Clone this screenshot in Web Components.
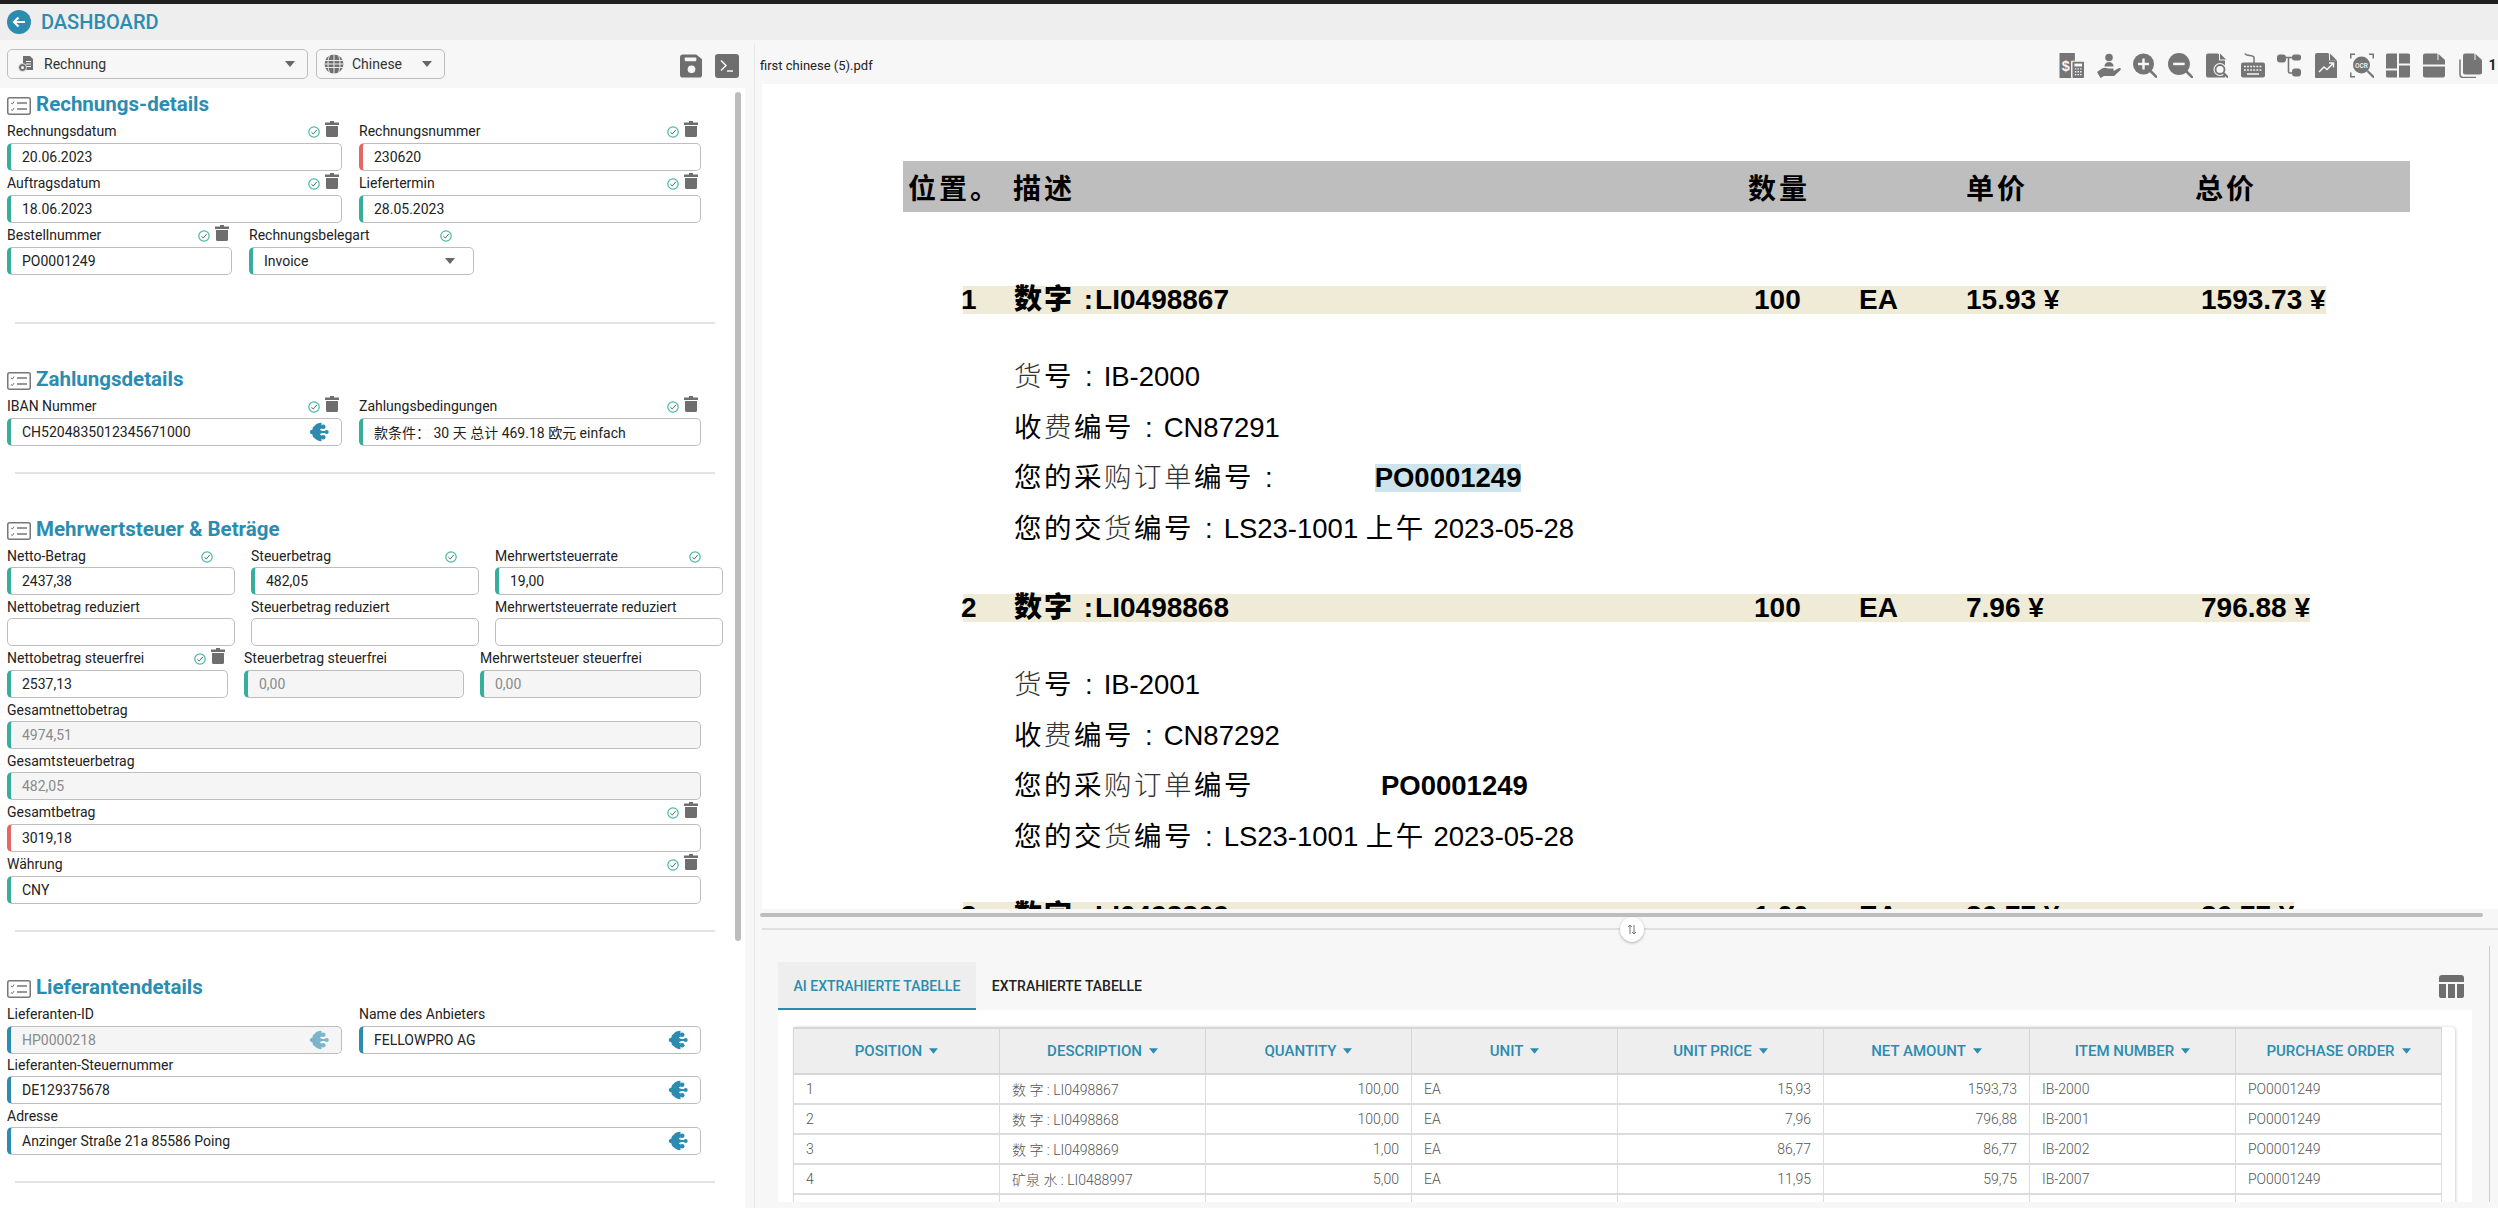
<!DOCTYPE html>
<html lang="de">
<head>
<meta charset="utf-8">
<title>Dashboard</title>
<style>
  html, body { margin: 0; height: 100%; overflow: hidden; background: #f7f7f7; }
  body { font-family: Roboto, "Noto Sans CJK SC", sans-serif; font-size: 14px; color: #222; }
</style>
</head>
<body>
<invoice-app></invoice-app>

<script>
const BLUE = '#2b8cb0';

const ICONS = {
  back: '<circle cx="12" cy="12" r="12" fill="currentColor"/><path d="M18 12H7M11.500 7.500 7 12l4.500 4.500" fill="none" stroke="#fff" stroke-width="2.200"/>',
  trash: '<path d="M5 0h4v1.500h5v2.500H0V1.500h5zM1 5h12v9.500a1.500 1.500 0 0 1-1.500 1.500h-9A1.500 1.500 0 0 1 1 14.500z" fill="currentColor"/>',
  check: '<circle cx="6" cy="6" r="5.200" fill="none" stroke="#45b8a6" stroke-width="1.200"/><path d="M3.400 6.200 5.300 8l3.400-4" fill="none" stroke="#4a6f70" stroke-width="1"/>',
  brain: '<path d="M12.500.8C9.500.8 7 2 5.500 4 3.500 5 3.500 6.500 3.500 7.500 1.500 8 .8 9 .8 10s.7 2 2.700 2.500c0 1 0 2.500 2 3.500 1.500 2 4 3.200 7 3.200z" fill="currentColor"/><circle cx="14.200" cy="4.800" r="2.300" fill="currentColor"/><circle cx="17.700" cy="10" r="2" fill="currentColor"/><circle cx="14.200" cy="15.200" r="2.300" fill="currentColor"/><path d="M12 10h5" stroke="currentColor" stroke-width="2"/><path d="M11 7.700h5M11 12.300h5" stroke="#fff" stroke-width="1"/>',
  caret: '<path d="M0 0h10L5 6z" fill="currentColor"/>',
  docmoney: '<path d="M5 0h7l3 3v11H5z" fill="currentColor"/><path d="M8 5.500h5M8 8h5M8 10.500h5" stroke="#f7f7f7" stroke-width="1"/><circle cx="4.500" cy="11.500" r="4" fill="currentColor" stroke="#f7f7f7" stroke-width=".8"/><circle cx="4.500" cy="11.500" r="1.500" fill="#f7f7f7"/>',
  globe: '<circle cx="10" cy="10" r="9.500" fill="currentColor"/><path d="M0 6.500h20M0 10h20M0 13.500h20M10 0v20M5.500 1.500c-2 5-2 12 0 17M14.500 1.500c2 5 2 12 0 17" fill="none" stroke="#f7f7f7" stroke-width=".9"/>',
  save: '<path d="M3 0h14l6 5v16a3 3 0 0 1-3 3H3a3 3 0 0 1-3-3V3a3 3 0 0 1 3-3z" fill="currentColor"/><rect x="5" y="3" width="12" height="4" rx="1" fill="#f7f7f7"/><circle cx="12" cy="15.500" r="4" fill="#f7f7f7"/>',
  terminal: '<rect width="24" height="24" rx="3" fill="currentColor"/><path d="M6 6.500 11 11.500 6 16.500M12 17h6" fill="none" stroke="#f7f7f7" stroke-width="1.500"/>',
  section: '<rect x=".75" y=".75" width="22.500" height="16.500" rx="2" fill="#fff" stroke="#777" stroke-width="1.500"/><path d="M10 6h10M10 12h10" stroke="#777" stroke-width="1.500"/><path d="M4 6l1.500 1L7 4.500M4 12.500l1.500 1L7 11" fill="none" stroke="#777" stroke-width="1"/>',
  columns: '<path d="M3 0h19a3 3 0 0 1 3 3v4H0V3a3 3 0 0 1 3-3zM0 9h7v14H2a2 2 0 0 1-2-2zM9 9h7v14H9zM18 9h7v12a2 2 0 0 1-2 2h-5z" fill="currentColor"/>',
  invoice: '<path d="M0 0h16v26H0z" fill="currentColor"/><rect x="12" y="8" width="14" height="18" rx="1" fill="#f7f7f7"/><rect x="13.500" y="9" width="12" height="17" rx="1" fill="currentColor"/><rect x="15.500" y="11" width="8" height="3" fill="#f7f7f7"/><path d="M16 16.500h8M16 19.500h8M16 22.500h8" stroke="#f7f7f7" stroke-width="1.500" stroke-dasharray="1.500 1.200"/><text x="6.500" y="19" font-family="Liberation Sans, sans-serif" font-weight="700" font-size="15" text-anchor="middle" fill="#f7f7f7">$</text>',
  hand: '<circle cx="13" cy="4.500" r="3.800" fill="currentColor"/><path d="M8.500 13.500c0-3 1.800-4.500 4.500-4.500s4.500 1.500 4.500 4.500z" fill="currentColor"/><path d="M1 19l5-3.500c2-1 4-1 6 0h4.500c1.500 0 1.500 2 0 2.200H12l6.500-.2 4.500-2.500c1.500-.5 2.500 1 1.300 2.200L18 23H8l-3.500 2z" fill="currentColor"/>',
  zoomin: '<circle cx="10.500" cy="10.500" r="10.500" fill="currentColor"/><path d="M17 17l7 7" stroke="currentColor" stroke-width="2.500"/><path d="M10.500 5v11M5 10.500h11" stroke="#f7f7f7" stroke-width="2.400"/>',
  zoomout: '<circle cx="10.500" cy="10.500" r="10.500" fill="currentColor"/><path d="M17 17l7 7" stroke="currentColor" stroke-width="2.500"/><path d="M5 10.500h11" stroke="#f7f7f7" stroke-width="2.400"/>',
  docsearch: '<path d="M2 0h10l7 7v17H2a2 2 0 0 1-2-2V2a2 2 0 0 1 2-2z" fill="currentColor"/><path d="M13 0l7 7h-7z" fill="#f7f7f7"/><path d="M14 0l6 6h-6z" fill="currentColor"/><circle cx="14" cy="16" r="6.500" fill="#f7f7f7"/><circle cx="14" cy="16" r="4.500" fill="none" stroke="currentColor" stroke-width="1.800"/><path d="M17.500 19.500l4.500 4.500" stroke="currentColor" stroke-width="2"/>',
  keyboard: '<path d="M4 0c1 3 9 1 9 4v6" fill="none" stroke="currentColor" stroke-width="1.500"/><rect y="9" width="24" height="15" rx="2" fill="currentColor"/><path d="M3 13h18M3 16.500h18" stroke="#f7f7f7" stroke-width="1.500" stroke-dasharray="1.800 1.300"/><path d="M6 20.500h12" stroke="#f7f7f7" stroke-width="1.500"/>',
  tree: '<rect y="1" width="9" height="8" rx="3" fill="currentColor"/><rect x="15" y="1" width="9" height="6" rx="2.500" fill="currentColor"/><rect x="15" y="15" width="9" height="8" rx="3" fill="currentColor"/><path d="M9 4h6M11.500 4v14c0 1 .5 1.500 1.500 1.500h2" fill="none" stroke="currentColor" stroke-width="1.600"/>',
  docchart: '<path d="M2 0h11l9 8v16a1.500 1.500 0 0 1-1.500 1.500H2A2 2 0 0 1 0 23.500V2a2 2 0 0 1 2-2z" fill="currentColor"/><path d="M14 0l8 7.500h-8z" fill="#f7f7f7"/><path d="M15 .5l7 7h-7z" fill="currentColor"/><path d="M4 19l5-5 3 2.500 6-6M14 10h4.500v4.500" fill="none" stroke="#f7f7f7" stroke-width="1.500"/>',
  ocr: '<path d="M.75 5V.75H5M19 .75h4.250V5M.75 19v4.250H5" fill="none" stroke="currentColor" stroke-width="1.500"/><circle cx="11.500" cy="11.500" r="8.500" fill="currentColor"/><text x="11.500" y="14" font-family="Roboto, sans-serif" font-size="6.500" font-weight="500" text-anchor="middle" fill="#f7f7f7">OCR</text><path d="M17.500 17.500l6.500 6.500" stroke="currentColor" stroke-width="2.200"/>',
  grid: '<path d="M1.500 0H11v15H0V1.500A1.500 1.500 0 0 1 1.500 0zM13 0h9.500A1.500 1.500 0 0 1 24 1.500V10H13zM0 17h11v7H1.500A1.500 1.500 0 0 1 0 22.500zM13 12h11v10.500a1.500 1.500 0 0 1-1.500 1.500H13z" fill="currentColor"/>',
  docsplit: '<path d="M2 0h12l8 7v4H0V2a2 2 0 0 1 2-2zM0 13h22v9a2 2 0 0 1-2 2H2a2 2 0 0 1-2-2z" fill="currentColor"/><path d="M14.500 0l7.500 6.500h-7.500z" fill="#f7f7f7"/><path d="M15.500.5l6.500 6h-6.500z" fill="currentColor"/>',
  copies: '<path d="M1 6v15a3 3 0 0 0 3 3h13" fill="none" stroke="currentColor" stroke-width="1.500"/><path d="M6 0h9l8 7v12a2 2 0 0 1-2 2H6a2 2 0 0 1-2-2V2a2 2 0 0 1 2-2z" fill="currentColor"/><path d="M15.500 0l7.500 6.500h-7.500z" fill="#f7f7f7"/><path d="M16.500.5l6.500 6h-6.500z" fill="currentColor"/>'
};

const VIEWS = {
  back: '0 0 24 24', trash: '0 0 14 16', check: '0 0 12 12', brain: '0 0 20 20', caret: '0 0 10 6',
  docmoney: '0 0 16 16', globe: '0 0 20 20', section: '0 0 24 18', columns: '0 0 25 23',
  invoice: '0 0 26 26', hand: '0 0 25 25', docsearch: '0 0 22 24', docchart: '0 0 22 25', docsplit: '0 0 22 24',
  copies: '0 0 23 24'
};

class AppIcon extends HTMLElement {
  connectedCallback() {
    const name = this.getAttribute('name');
    const w = this.getAttribute('w') || 24;
    const h = this.getAttribute('h') || w;
    const root = this.attachShadow({ mode: 'open' });
    root.innerHTML = `
      <style>
        :host { display: inline-flex; flex: none; line-height: 0; }
      </style>
      <svg width="${w}" height="${h}" viewBox="${VIEWS[name] || '0 0 24 24'}">${ICONS[name]}</svg>`;
  }
}
customElements.define('app-icon', AppIcon);

class AppHeader extends HTMLElement {
  constructor() {
    super();
    this.attachShadow({ mode: 'open' }).innerHTML = `
      <style>
        :host { display: flex; align-items: center; gap: 10px; height: 36px; padding-left: 7px;
          background: #eee; border-top: 4px solid #1f1f1f; color: ${BLUE}; font-size: 20px; font-weight: 500; }
      </style>
      <app-icon name="back"></app-icon><span><slot></slot></span>`;
  }
}
customElements.define('app-header', AppHeader);

class SelectBox extends HTMLElement {
  constructor() {
    super();
    this.attachShadow({ mode: 'open' }).innerHTML = `
      <style>
        :host { display: flex; align-items: center; box-sizing: border-box; height: 30px; padding: 0 12px 0 10px;
          border: 1px solid #bdbdbd; border-radius: 5px; color: #333; background: #f7f7f7; font-size: 14px; }
        span { flex: 1; }
        .ic { display: flex; color: #707070; }
        .car { color: #666; margin-left: 8px; }
      </style>
      <div class="ic"><slot name="icon"></slot></div><span><slot></slot></span><app-icon class="car" name="caret" w="10" h="6"></app-icon>`;
  }
}
customElements.define('select-box', SelectBox);

class FormField extends HTMLElement {
  connectedCallback() {
    const has = n => this.hasAttribute(n);
    const state = this.getAttribute('state') || '';
    const bar = { ok: '#36ad9d', err: '#e46767', ai: BLUE }[state];
    const root = this.attachShadow({ mode: 'open' });
    root.innerHTML = `
      <style>
        :host { display: block; min-width: 0; color: #222; }
        .head { display: flex; height: var(--label, 24px); box-sizing: border-box; padding-right: 3px; }
        label { flex: 1; align-self: center; font-size: 14px; white-space: nowrap; }
        .chk { margin: 7px 5px 0 0; align-self: flex-start; }
        .del { margin-top: 2px; align-self: flex-start; color: #6e6e6e; }
        .gap { width: 14px; }
        .box { display: flex; align-items: center; box-sizing: border-box; height: 28px; padding: 0 12px 0 11px;
          border: 1px solid #bdbdbd; border-radius: 5px; background: #fff; font-size: 14px; white-space: nowrap; }
        .bar { border-left: 4px solid ${bar}; }
        .off { background: #f5f5f5; color: #8a8a8a; }
        .val { flex: 1; min-height: 1em; }
        .brain { color: ${BLUE}; }
        .off .brain { opacity: .6; }
        .car { color: #666; margin-right: 6px; }
      </style>
      <div class="head">
        <label>${this.getAttribute('label')}</label>
        ${has('check') ? '<app-icon class="chk" name="check" w="12" h="12"></app-icon>' : ''}
        ${has('trash') ? '<app-icon class="del" name="trash" w="14" h="16"></app-icon>' : (has('check') ? '<div class="gap"></div>' : '')}
      </div>
      <div class="box ${bar ? 'bar' : ''} ${has('disabled') ? 'off' : ''}">
        <div class="val"><slot></slot></div>
        ${has('ai') ? '<app-icon class="brain" name="brain" w="20" h="20"></app-icon>' : ''}
        ${has('select') ? '<app-icon class="car" name="caret" w="10" h="6"></app-icon>' : ''}
      </div>`;
  }
}
customElements.define('form-field', FormField);

class FormRow extends HTMLElement {
  constructor() {
    super();
    this.attachShadow({ mode: 'open' }).innerHTML = `
      <style>
        :host { display: grid; grid-template-columns: var(--cols); column-gap: var(--gap, 17px); }
      </style>
      <slot></slot>`;
  }
}
customElements.define('form-row', FormRow);

class FormSection extends HTMLElement {
  constructor() {
    super();
    this.attachShadow({ mode: 'open' }).innerHTML = `
      <style>
        :host { display: block; margin-bottom: 41px; }
        h2 { display: flex; align-items: center; gap: 5px; height: 28px; margin: 0 0 1px; color: ${BLUE};
          font-size: 20.500px; font-weight: 700; white-space: nowrap; }
        app-icon { margin-top: 3px; }
        hr { height: 2px; margin: var(--after, 26px) 20px 0 8px; border: 0; background: #e3e3e3; }
      </style>
      <h2><app-icon name="section" w="24" h="18"></app-icon><slot name="title"></slot></h2>
      <slot></slot>
      <hr>`;
  }
}
customElements.define('form-section', FormSection);

class InvoiceForm extends HTMLElement {
  constructor() {
    super();
    this.attachShadow({ mode: 'open' }).innerHTML = `
      <style>
        :host { display: flex; flex: 1; min-height: 0; background: #fff; overflow: hidden; }
        .content { width: 728px; padding: 2px 0 0 7px; flex: none; }
        .thumb { width: 6px; height: 849px; margin-top: 4px; border-radius: 3px; background: #bdbdbd; flex: none; }
      </style>
      <div class="content"><slot></slot></div>
      <div class="thumb"></div>`;
  }
}
customElements.define('invoice-form', InvoiceForm);

class LeftPane extends HTMLElement {
  constructor() {
    super();
    this.attachShadow({ mode: 'open' }).innerHTML = `
      <style>
        :host { display: flex; flex-direction: column; flex: none; width: 757px; box-sizing: border-box;
          padding-right: 12px; min-height: 0; position: relative; }
        .bar { display: flex; align-items: center; height: 48px; padding: 0 6px 0 7px; gap: 8px; flex: none; }
        .btn { display: flex; gap: 12px; margin-left: auto; margin-top: 4px; color: #6e6e6e; }
        .line { position: absolute; left: 754px; top: 4px; bottom: 0; width: 1px; background: #e8e8e8; }
      </style>
      <div class="bar">
        <slot name="selects"></slot>
        <div class="btn">
          <app-icon name="save" w="23" h="24"></app-icon>
          <app-icon name="terminal" w="24" h="24"></app-icon>
        </div>
      </div>
      <slot></slot>
      <div class="line"></div>`;
  }
}
customElements.define('left-pane', LeftPane);

class PdfToolbar extends HTMLElement {
  constructor() {
    super();
    const names = [['invoice', 26], ['hand', 25], ['zoomin', 24], ['zoomout', 25], ['docsearch', 22], ['keyboard', 24],
      ['tree', 24], ['docchart', 22], ['ocr', 24], ['grid', 24], ['docsplit', 22], ['copies', 23]];
    this.attachShadow({ mode: 'open' }).innerHTML = `
      <style>
        :host { display: flex; align-items: center; flex: none; height: 44px; padding-left: 3px; font-size: 13px; color: #222; overflow: hidden; }
        .name { flex: 1; margin-top: 6px; }
        .cell { display: flex; justify-content: center; width: 36.200px; color: #757575; margin-top: 6px; }
        .page { width: 9.600px; font-weight: 700; font-size: 14px; margin-top: 6px; overflow: hidden; }
      </style>
      <div class="name"><slot></slot></div>
      ${names.map(n => `<div class="cell"><app-icon name="${n[0]}" w="${n[1]}" h="25"></app-icon></div>`).join('')}
      <div class="page">1</div>`;
  }
}
customElements.define('pdf-toolbar', PdfToolbar);

class PdfHead extends HTMLElement {
  constructor() {
    super();
    this.attachShadow({ mode: 'open' }).innerHTML = `
      <style>
        :host { display: grid; grid-template-columns: 105px 735px 218px 229px 1fr; align-items: center; width: 1502px;
          height: 51px; padding-left: 5px; background: #bebebe; color: #000; font: 700 28px "Liberation Sans", "Noto Sans CJK SC", sans-serif; }
        span { letter-spacing: 3px; white-space: nowrap; }
      </style>
      <span>位置。</span><span>描述</span><span>数量</span><span>单价</span><span>总价</span>`;
  }
}
customElements.define('pdf-head', PdfHead);

class PdfItem extends HTMLElement {
  connectedCallback() {
    const cols = this.getAttribute('cells').split('|');
    const root = this.attachShadow({ mode: 'open' });
    root.innerHTML = `
      <style>
        :host { display: block; margin: 0 0 40px 60px; font: 27.500px "Liberation Sans", "Noto Sans CJK SC", sans-serif; color: #000; }
        .band { display: grid; width: fit-content; grid-template-columns: 51px 740px 105px 107px 235px auto; align-items: center; height: 28px;
          line-height: 28px; background: #efebd7; font-size: 28px; font-weight: 700; white-space: nowrap; }
        .lines { padding-top: 38px; margin-left: 51px; }
        .n { margin-left: -2px; }
        .d b { letter-spacing: 2px; }
        .d i { font-style: normal; margin-left: 2px; }
      </style>
      <div class="band">
        <span class="n">${cols[0]}</span><span class="d"><b>${cols[1]}</b>:<i>${cols[2]}</i></span><span>${cols[3]}</span><span>${cols[4]}</span><span>${cols[5]}</span><span>${cols[6]}</span>
      </div>
      <div class="lines"><slot></slot></div>`;
  }
}
customElements.define('pdf-item', PdfItem);

// text attribute: [..] is chinese, {..} is the thinner chinese the pdf has in places
class PdfLine extends HTMLElement {
  connectedCallback() {
    const text = this.getAttribute('text')
      .replace(':', '<span class="k">:</span>')
      .replace(/\[(.+?)\]/g, '<span class="c">$1</span>')
      .replace(/\{(.+?)\}/g, '<span class="c t">$1</span>');
    const po = this.getAttribute('po');
    const root = this.attachShadow({ mode: 'open' });
    root.innerHTML = `
      <style>
        :host { display: block; height: 50.500px; line-height: 50.500px; }
        .l { white-space: pre; }
        .c { letter-spacing: 2.500px; }
        .t { font-weight: 300; color: #333; }
        .k { margin: 0 11px; }
        .po { display: inline-block; height: 28px; line-height: 28px; font-weight: 700; margin-left: ${this.getAttribute('gap') || 0}px; }
        .mark { background: #cde4ec; }
      </style>
      <div class="l">${text}${po ? `<span class="po ${this.hasAttribute('mark') ? 'mark' : ''}">${po}</span>` : ''}</div>`;
  }
}
customElements.define('pdf-line', PdfLine);

class PdfViewer extends HTMLElement {
  constructor() {
    super();
    this.attachShadow({ mode: 'open' }).innerHTML = `
      <style>
        :host { display: block; height: 825px; flex: none; margin-left: 5px; padding: 77px 0 0 141px; box-sizing: border-box;
          background: #fff; overflow: hidden; }
        .gap { height: 74px; }
      </style>
      <slot name="head"></slot>
      <div class="gap"></div>
      <slot></slot>`;
  }
}
customElements.define('pdf-viewer', PdfViewer);

class TabBar extends HTMLElement {
  constructor() {
    super();
    this.attachShadow({ mode: 'open' }).innerHTML = `
      <style>
        :host { display: flex; align-items: stretch; height: 48px; font-size: 14px; font-weight: 500; white-space: nowrap; }
        .tab { display: flex; align-items: center; padding: 0 15.500px; box-sizing: border-box; color: #222; }
        .on { background: #eee; color: ${BLUE}; border-bottom: 2px solid ${BLUE}; padding-top: 2px; }
        .off { padding: 0 16px; }
        .right { margin-left: auto; margin-right: 8px; align-self: center; color: #6e6e6e; display: flex; }
      </style>
      <div class="tab on">AI EXTRAHIERTE TABELLE</div>
      <div class="tab off">EXTRAHIERTE TABELLE</div>
      <div class="right"><app-icon name="columns" w="25" h="23"></app-icon></div>`;
  }
}
customElements.define('tab-bar', TabBar);

class DataTable extends HTMLElement {
  constructor() {
    super();
    const heads = ['POSITION', 'DESCRIPTION', 'QUANTITY', 'UNIT', 'UNIT PRICE', 'NET AMOUNT', 'ITEM NUMBER', 'PURCHASE ORDER'];
    const rows = [
      ['1', '数 字 : LI0498867', '100,00', 'EA', '15,93', '1593,73', 'IB-2000', 'PO0001249'],
      ['2', '数 字 : LI0498868', '100,00', 'EA', '7,96', '796,88', 'IB-2001', 'PO0001249'],
      ['3', '数 字 : LI0498869', '1,00', 'EA', '86,77', '86,77', 'IB-2002', 'PO0001249'],
      ['4', '矿泉 水 : LI0488997', '5,00', 'EA', '11,95', '59,75', 'IB-2007', 'PO0001249'],
      ['', '', '', '', '', '', '', '']
    ];
    const right = [2, 4, 5];
    this.attachShadow({ mode: 'open' }).innerHTML = `
      <style>
        :host { display: block; flex: 1; min-height: 0; background: #fff; padding: 17px 0 0 15px; overflow: hidden; }
        .card { width: 1662px; height: 200px; box-shadow: 1px 0 3px rgba(0,0,0,.18); border-radius: 4px 4px 0 0; }
        table { width: 1649px; border-collapse: collapse; table-layout: fixed; }
        th { height: 44px; background: #eee; color: ${BLUE}; font-size: 15px; font-weight: 500; border: 1px solid #d6d6d6; border-width: 2px 1px; padding: 0; }
        th span { display: inline-flex; align-items: center; gap: 7px; }
        td { height: 28px; padding: 0 12px; border: 1px solid #dcdcdc; border-width: 0 1px 2px; color: #555; font-weight: 300; font-size: 14px; white-space: nowrap; }
        td.r { text-align: right; }
        tr:last-child td { height: 20px; }
      </style>
      <div class="card"><table>
        <tr>${heads.map(h => `<th><span>${h}<app-icon name="caret" w="9" h="6"></app-icon></span></th>`).join('')}</tr>
        ${rows.map(r => `<tr>${r.map((c, i) => `<td class="${right.includes(i) ? 'r' : ''}">${c}</td>`).join('')}</tr>`).join('')}
      </table></div>`;
  }
}
customElements.define('data-table', DataTable);

class RightPane extends HTMLElement {
  constructor() {
    super();
    this.attachShadow({ mode: 'open' }).innerHTML = `
      <style>
        :host { display: flex; flex-direction: column; flex: 1; min-width: 0; min-height: 0; position: relative; }
        .hbar { height: 4px; margin: 4px 15px 0 3px; background: #bdbdbd; border-radius: 2px; flex: none; }
        .line { height: 2px; margin: 11px 0 0 5px; background: #e0e0e0; flex: none; }
        .lower { display: flex; flex-direction: column; flex: none; height: 256px; margin: 16px 0 6px 21px; padding: 16px 26px 0 0; box-sizing: border-box; position: relative; }
        .edge { position: absolute; left: 1711px; top: 0; bottom: 0; width: 1px; background: #ccc; }
        .grip { position: absolute; left: 863px; top: 877px; width: 24px; height: 25px; border-radius: 50%; background: #fff;
          box-shadow: 0 1px 3px rgba(0,0,0,.3); display: flex; align-items: center; justify-content: center; }
      </style>
      <slot name="toolbar"></slot>
      <slot name="viewer"></slot>
      <div class="hbar"></div>
      <div class="line"></div>
      <div class="lower"><slot></slot><div class="edge"></div></div>
      <div class="grip"><svg width="10" height="13" viewBox="0 0 10 13"><path d="M3 11V2M1 4l2-2 2 2M7 2v9M5 9l2 2 2-2" fill="none" stroke="#777" stroke-width="1"/></svg></div>`;
  }
}
customElements.define('right-pane', RightPane);

class InvoiceApp extends HTMLElement {
  constructor() {
    super();
    this.attachShadow({ mode: 'open' }).innerHTML = `
      <style>
        :host { display: flex; flex-direction: column; height: 1208px; overflow: hidden; }
        .split { display: flex; flex: 1; min-height: 0; }
        .two { --cols: 335px 342px; }
        .three { --cols: 228px 228px 228px; --gap: 16px; }
        .threeb { --cols: 221px 220px 221px; --gap: 16px; }
        .one { --cols: 694px; }
        .l23 { --label: 23px; }
        .sel { width: 301px; }
        .lang { width: 129px; }
        span[slot=icon] { display: flex; margin-right: 10px; }
      </style>
      <app-header>DASHBOARD</app-header>
      <div class="split">
        <left-pane>
          <select-box slot="selects" class="sel"><span slot="icon"><app-icon name="docmoney" w="16" h="16"></app-icon></span>Rechnung</select-box>
          <select-box slot="selects" class="lang"><span slot="icon" style="margin-left:-3px;margin-right:8px"><app-icon name="globe" w="20" h="20"></app-icon></span>Chinese</select-box>
          <invoice-form>
            <form-section style="--after:47px">
              <span slot="title">Rechnungs-details</span>
              <form-row class="two">
                <form-field label="Rechnungsdatum" state="ok" check trash>20.06.2023</form-field>
                <form-field label="Rechnungsnummer" state="err" check trash>230620</form-field>
              </form-row>
              <form-row class="two">
                <form-field label="Auftragsdatum" state="ok" check trash>18.06.2023</form-field>
                <form-field label="Liefertermin" state="ok" check trash>28.05.2023</form-field>
              </form-row>
              <form-row style="--cols:225px 225px">
                <form-field label="Bestellnummer" state="ok" check trash>PO0001249</form-field>
                <form-field label="Rechnungsbelegart" state="ok" check select>Invoice</form-field>
              </form-row>
            </form-section>

            <form-section>
              <span slot="title">Zahlungsdetails</span>
              <form-row class="two">
                <form-field label="IBAN Nummer" state="ok" check trash ai>CH5204835012345671000</form-field>
                <form-field label="Zahlungsbedingungen" state="ok" check trash>款条件： 30 天 总计 469.18 欧元 einfach</form-field>
              </form-row>
            </form-section>

            <form-section>
              <span slot="title">Mehrwertsteuer &amp; Beträge</span>
              <form-row class="three l23">
                <form-field label="Netto-Betrag" state="ok" check>2437,38</form-field>
                <form-field label="Steuerbetrag" state="ok" check>482,05</form-field>
                <form-field label="Mehrwertsteuerrate" state="ok" check>19,00</form-field>
              </form-row>
              <form-row class="three l23">
                <form-field label="Nettobetrag reduziert"></form-field>
                <form-field label="Steuerbetrag reduziert"></form-field>
                <form-field label="Mehrwertsteuerrate reduziert"></form-field>
              </form-row>
              <form-row class="threeb">
                <form-field label="Nettobetrag steuerfrei" state="ok" check trash>2537,13</form-field>
                <form-field label="Steuerbetrag steuerfrei" state="ok" disabled>0,00</form-field>
                <form-field label="Mehrwertsteuer steuerfrei" state="ok" disabled>0,00</form-field>
              </form-row>
              <form-row class="one l23"><form-field label="Gesamtnettobetrag" state="ok" disabled>4974,51</form-field></form-row>
              <form-row class="one l23"><form-field label="Gesamtsteuerbetrag" state="ok" disabled>482,05</form-field></form-row>
              <form-row class="one"><form-field label="Gesamtbetrag" state="err" check trash>3019,18</form-field></form-row>
              <form-row class="one"><form-field label="Währung" state="ok" check trash>CNY</form-field></form-row>
            </form-section>

            <form-section>
              <span slot="title">Lieferantendetails</span>
              <form-row class="two">
                <form-field label="Lieferanten-ID" state="ai" disabled ai>HP0000218</form-field>
                <form-field label="Name des Anbieters" state="ai" ai>FELLOWPRO AG</form-field>
              </form-row>
              <form-row class="one" style="--label:22px"><form-field label="Lieferanten-Steuernummer" state="ai" ai>DE129375678</form-field></form-row>
              <form-row class="one l23"><form-field label="Adresse" state="ai" ai>Anzinger Straße 21a 85586 Poing</form-field></form-row>
            </form-section>
          </invoice-form>
        </left-pane>

        <right-pane>
          <pdf-toolbar slot="toolbar">first chinese (5).pdf</pdf-toolbar>
          <pdf-viewer slot="viewer">
            <pdf-head slot="head"></pdf-head>
            <pdf-item cells="1|数字 |LI0498867|100|EA|15.93 ¥|1593.73 ¥">
              <pdf-line text="{货}[号]:IB-2000"></pdf-line>
              <pdf-line text="[收]{费}[编号]:CN87291"></pdf-line>
              <pdf-line text="[您的采]{购订单}[编号]:" po="PO0001249" gap="91" mark></pdf-line>
              <pdf-line text="[您的交]{货}[编号]:LS23-1001 [上午] 2023-05-28"></pdf-line>
            </pdf-item>
            <pdf-item cells="2|数字 |LI0498868|100|EA|7.96 ¥|796.88 ¥">
              <pdf-line text="{货}[号]:IB-2001"></pdf-line>
              <pdf-line text="[收]{费}[编号]:CN87292"></pdf-line>
              <pdf-line text="[您的采]{购订单}[编号]" po="PO0001249" gap="127"></pdf-line>
              <pdf-line text="[您的交]{货}[编号]:LS23-1001 [上午] 2023-05-28"></pdf-line>
            </pdf-item>
            <pdf-item cells="3|数字 |LI0498869|1.00|EA|86.77 ¥|86.77 ¥"></pdf-item>
          </pdf-viewer>
          <tab-bar></tab-bar>
          <data-table></data-table>
        </right-pane>
      </div>`;
  }
}
customElements.define('invoice-app', InvoiceApp);
</script>
</body>
</html>
